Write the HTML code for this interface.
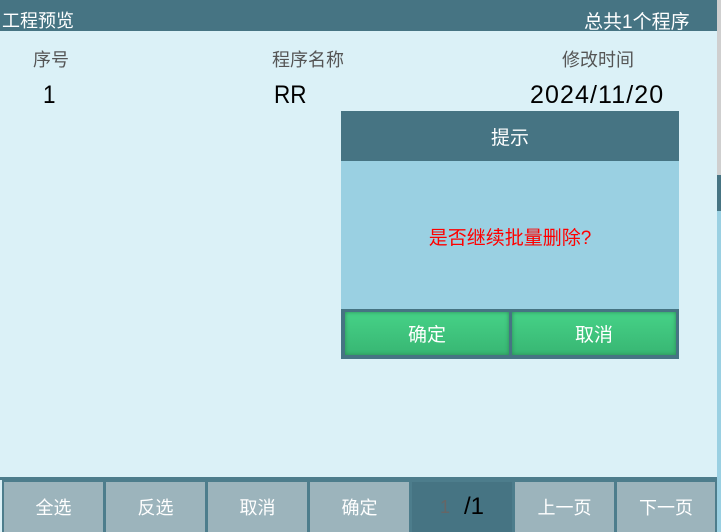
<!DOCTYPE html><html><head><meta charset="utf-8"><style>
*{margin:0;padding:0;box-sizing:border-box}
body{width:721px;height:532px;overflow:hidden;background:#dbf1f7;position:relative;font-family:"Liberation Sans","Noto Sans CJK SC",sans-serif}
.a{position:absolute}
.hdr{left:0;top:0;width:717px;height:31px;background:#467483;color:#fff;font-size:18px}
.btn{top:480px;height:52px;background:#9cb4bc;color:#fff;font-size:18px;display:flex;align-items:center;justify-content:center;border:2px solid #4d7d8c;border-bottom:none}
.g{background:linear-gradient(#46d287,#38b673);color:#fff;font-size:19px;display:flex;align-items:center;justify-content:center;box-shadow:inset 0 0 4px #2a8a55}
</style></head><body>
<div class="a hdr"><span class="a" style="left:2px;top:7px">工程预览</span><span class="a" style="left:584px;top:7px;font-size:19px">总共1个程序</span></div>
<div class="a" style="left:717px;top:0;width:4px;height:175px;background:#cfcfcf"></div>
<div class="a" style="left:717px;top:175px;width:4px;height:36px;background:#467483"></div>
<div class="a" style="left:717px;top:211px;width:4px;height:321px;background:#9ad0e2"></div>
<div class="a" style="left:33px;top:46px;font-size:18px;color:#555">序号</div>
<div class="a" style="left:272px;top:46px;font-size:18px;color:#555">程序名称</div>
<div class="a" style="left:562px;top:46px;font-size:18px;color:#555">修改时间</div>
<div class="a" style="left:43px;top:81px;font-size:25px;color:#000;transform:scaleX(.9);transform-origin:left">1</div>
<div class="a" style="left:274px;top:81px;font-size:25px;color:#000;transform:scaleX(.9);transform-origin:left">RR</div>
<div class="a" style="left:530px;top:81px;font-size:25px;color:#000;letter-spacing:1.1px">2024/11/20</div>
<div class="a" style="left:341px;top:111px;width:338px;height:50px;background:#467483;color:#fff;font-size:19px;display:flex;align-items:center;justify-content:center">提示</div>
<div class="a" style="left:341px;top:161px;width:338px;height:148px;background:#9ad0e2;color:#f00;font-size:19px;display:flex;align-items:center;justify-content:center;padding-top:2px">是否继续批量删除?</div>
<div class="a" style="left:341px;top:309px;width:338px;height:50px;background:#467483"></div>
<div class="a g" style="left:345px;top:312px;width:164px;height:43px">确定</div>
<div class="a g" style="left:512px;top:312px;width:164px;height:43px">取消</div>
<div class="a" style="left:0;top:477px;width:717px;height:3px;background:#4d7d8c"></div>
<div class="a btn" style="left:2px;width:103px">全选</div>
<div class="a btn" style="left:104px;width:103px">反选</div>
<div class="a btn" style="left:206px;width:103px">取消</div>
<div class="a btn" style="left:308px;width:103px">确定</div>
<div class="a btn" style="left:410px;width:104px;background:#467483;font-size:24px"><span style="color:#666;font-size:18px;margin-right:14px">1</span><span style="color:#000">/1</span></div>
<div class="a btn" style="left:513px;width:103px">上一页</div>
<div class="a btn" style="left:615px;width:102px">下一页</div>
</body></html>
